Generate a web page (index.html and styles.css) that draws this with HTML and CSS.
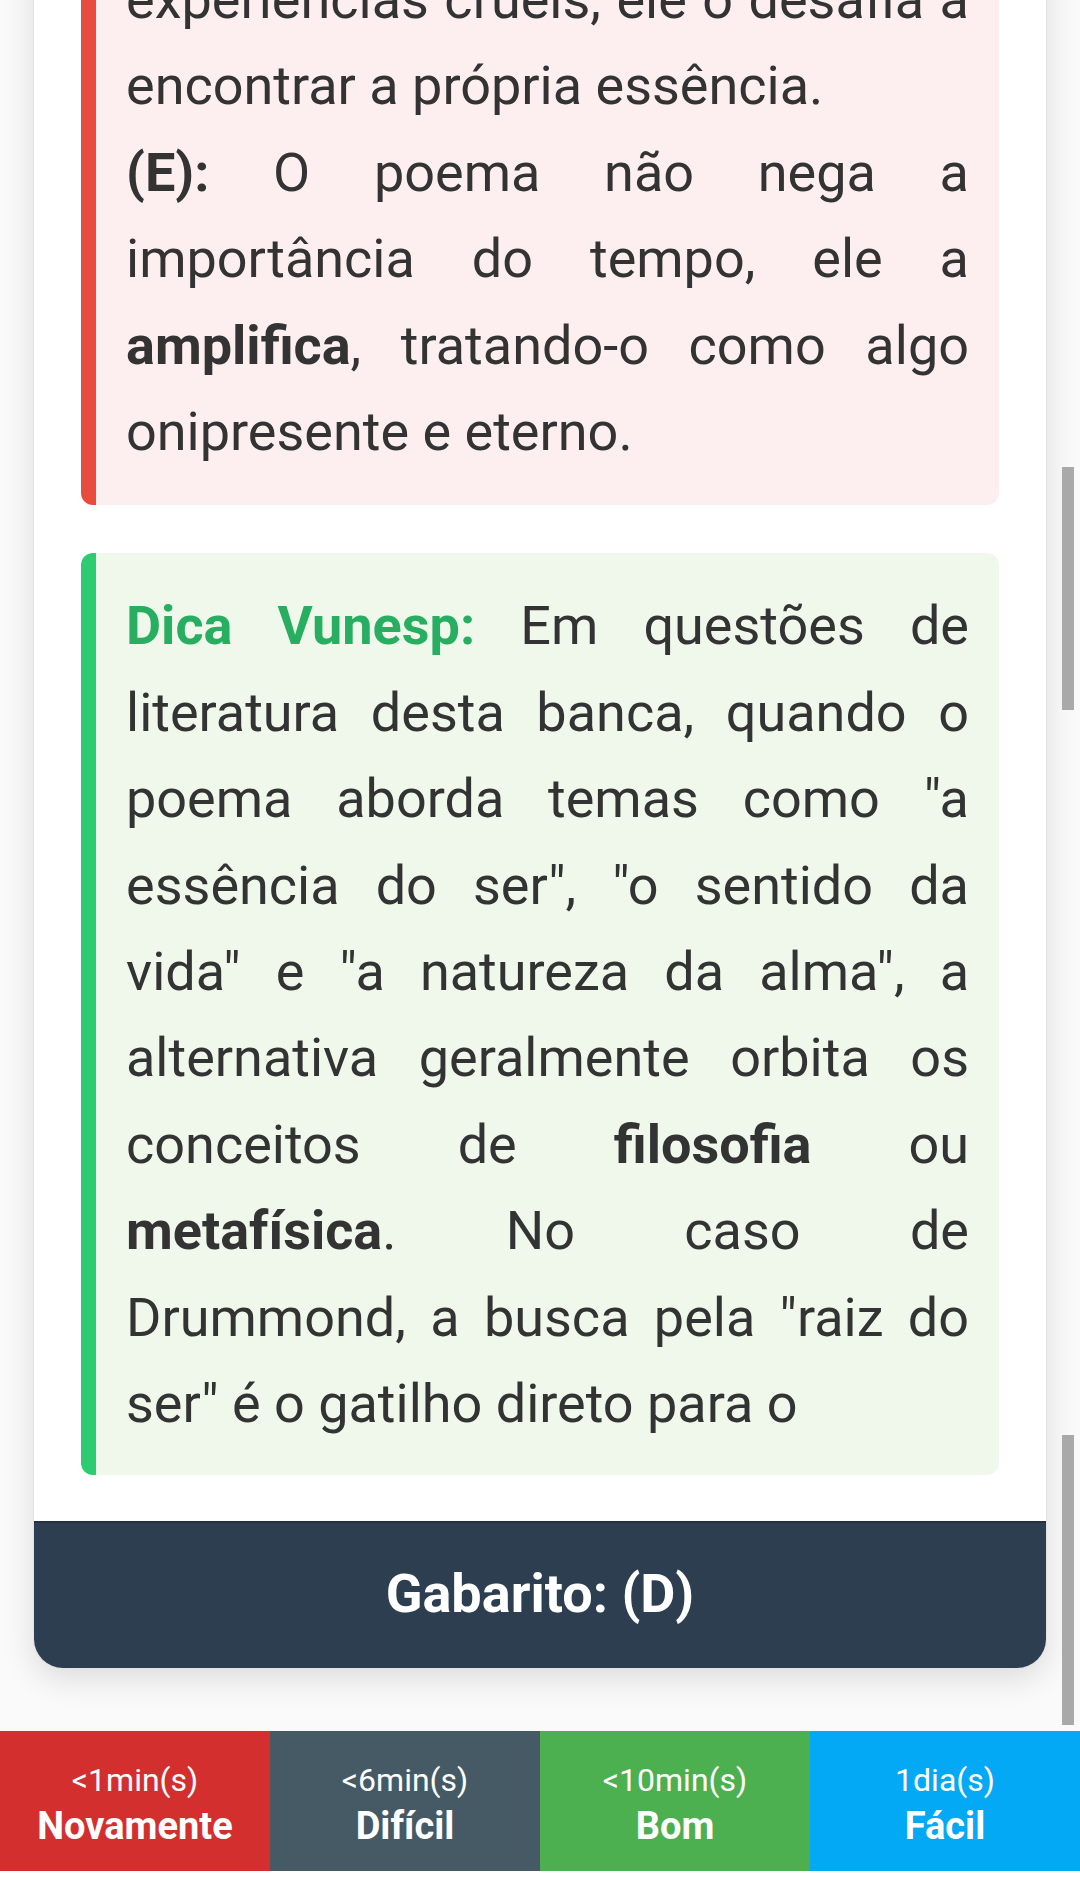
FILE: index.html
```html
<!DOCTYPE html>
<html lang="pt-BR">
<head>
    <meta charset="UTF-8">
    <meta name="viewport" content="width=device-width, initial-scale=1.0">
    <title>Revisão - Flashcard</title>
    <link rel="stylesheet" href="styles.css">
</head>
<body>
    <div class="review-area">
        <div class="card">
            <div class="card-body">
                <div class="note note-wrong">
                    <p>experiências cruéis, ele o desafia a encontrar a própria essência.</p>
                    <p><strong>(E):</strong> O poema não nega a importância do tempo, ele a <strong>amplifica</strong>, tratando-o como algo onipresente e eterno.</p>
                </div>

                <div class="note note-tip">
                    <p><strong class="tip-label">Dica Vunesp:</strong> Em questões de literatura desta banca, quando o poema aborda temas como "a essência do ser", "o sentido da vida" e "a natureza da alma", a alternativa geralmente orbita os conceitos de <strong>filosofia</strong> ou <strong>metafísica</strong>. No caso de Drummond, a busca pela "raiz do ser" é o gatilho direto para o</p>
                </div>
            </div>

            <div class="answer-bar">Gabarito: (D)</div>
        </div>

        <div class="scrollbar scrollbar-top"></div>
        <div class="scrollbar scrollbar-bottom"></div>
    </div>

    <div class="rating-row">
        <button class="rate rate-again">
            <span class="rate-time">&lt;1min(s)</span>
            <span class="rate-label">Novamente</span>
        </button>
        <button class="rate rate-hard">
            <span class="rate-time">&lt;6min(s)</span>
            <span class="rate-label">Difícil</span>
        </button>
        <button class="rate rate-good">
            <span class="rate-time">&lt;10min(s)</span>
            <span class="rate-label">Bom</span>
        </button>
        <button class="rate rate-easy">
            <span class="rate-time">1dia(s)</span>
            <span class="rate-label">Fácil</span>
        </button>
    </div>
</body>
</html>
```

FILE: styles.css
```css
body {
    margin: 0;
    font-family: Roboto, "Noto Sans", Arial, sans-serif;
    background-color: #ffffff;
    color: #333333;
}

.review-area {
    position: relative;
    height: 1731px;
    overflow: hidden;
    background-color: #fafafa;
}

.card {
    margin: -121px 33px 0;
    background-color: #ffffff;
    border: 1px solid #e2e2e2;
    border-radius: 0 0 30px 30px;
    box-shadow: 0 10px 32px rgba(0, 0, 0, 0.12);
    overflow: hidden;
}

.card-body {
    padding: 47px 47px 46px;
}

.note {
    padding: 30px;
    border-left: 15px solid;
    border-radius: 12px;
    font-size: 54px;
    line-height: 86.4px;
    text-align: justify;
}

.note p {
    margin: 0;
}

.note strong {
    font-weight: bold;
}

.note-wrong {
    background-color: #fdeff0;
    border-left-color: #e74c3c;
}

.note-tip {
    margin-top: 48px;
    padding-bottom: 27px;
    background-color: #f0f8ec;
    border-left-color: #2ecc71;
}

.tip-label {
    color: #27ae60;
}

.answer-bar {
    background-color: #2c3e50;
    border-top: 2px solid #233241;
    color: #ffffff;
    text-align: center;
    font-size: 54px;
    font-weight: bold;
    line-height: 63px;
    padding: 39px 0 43px;
}

.scrollbar {
    position: absolute;
    right: 6px;
    width: 12px;
    background-color: #a9a9a9;
}

.scrollbar-top {
    top: 467px;
    height: 243px;
}

.scrollbar-bottom {
    top: 1435px;
    height: 290px;
}

.rating-row {
    display: grid;
    grid-template-columns: repeat(4, 1fr);
    height: 140px;
}

.rate {
    display: flex;
    flex-direction: column;
    align-items: center;
    padding: 27px 0 0;
    margin: 0;
    border: none;
    color: #ffffff;
    font-family: inherit;
    cursor: pointer;
}

.rate-time {
    font-size: 32px;
    line-height: 44px;
}

.rate-label {
    font-size: 38px;
    font-weight: bold;
    line-height: 48px;
}

.rate-again { background-color: #d32f2f; }
.rate-hard { background-color: #455a64; }
.rate-good { background-color: #4caf50; }
.rate-easy { background-color: #03a9f4; }
```
